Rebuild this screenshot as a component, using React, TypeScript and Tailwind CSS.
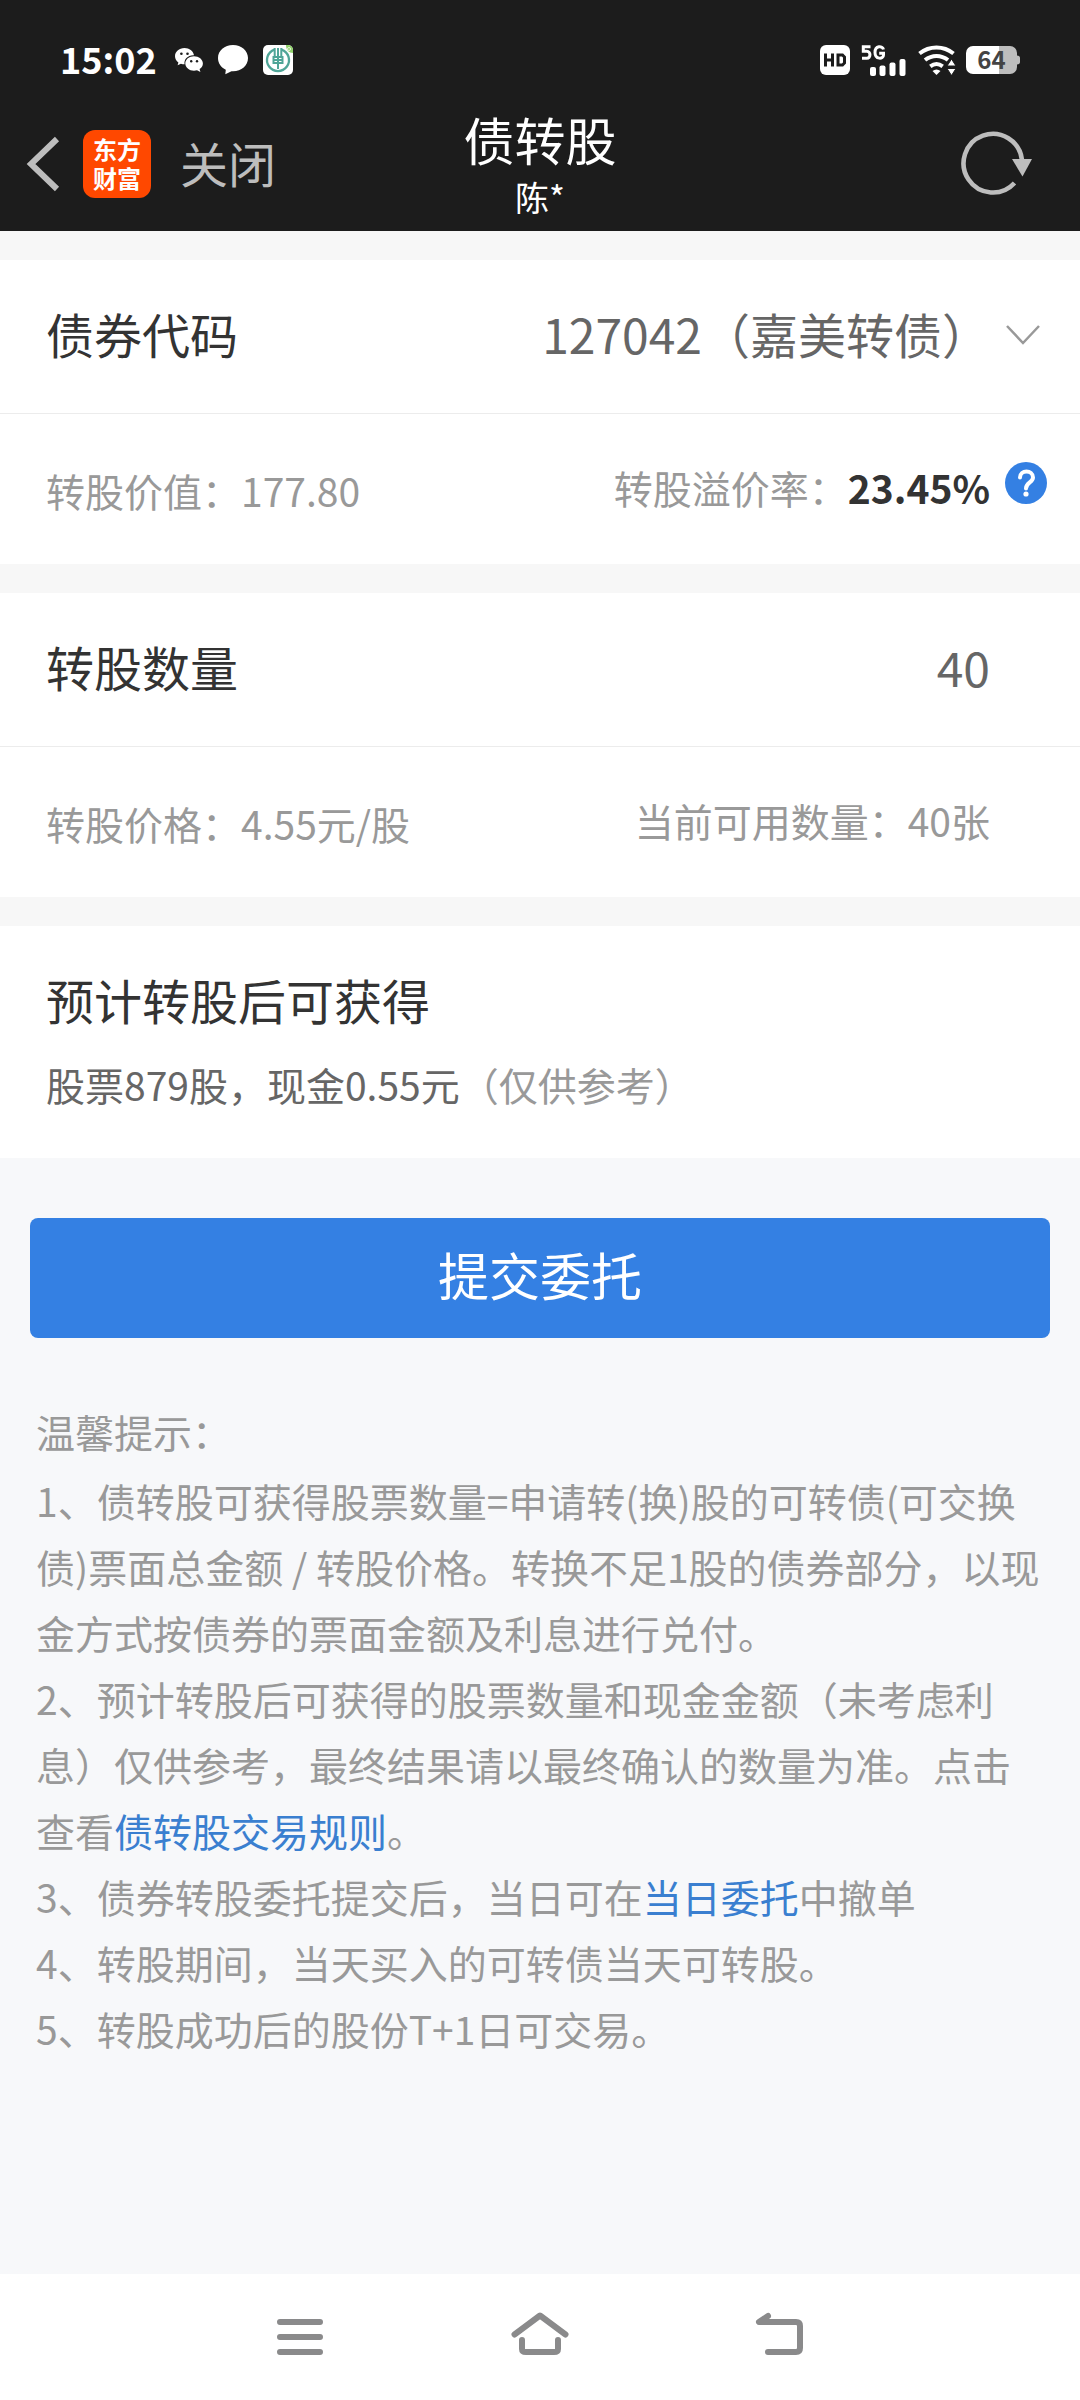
import { useState, type ReactNode } from 'react'

const BONDS = [{ code: '127042', name: '嘉美转债' }]

function StatusBar() {
  return (
    <div className="flex items-center justify-between h-[120px] pl-[60px] pr-[60px]">
      <div className="flex items-center">
        <span className="pb-1 text-[36px] leading-[48px] font-bold">15:02</span>
        <svg className="ml-[17px]" width="30" height="26" viewBox="0 0 30 26" aria-hidden="true">
          <path fill="#fff" d="M10.500 1C5 1 1 4.700 1 9.200c0 2.600 1.300 4.700 3.400 6.200L3.600 18.300l3.300-1.600c1.200.4 2.300.6 3.700.6C9.600 12.500 13.800 8 20 8.300 19.200 4 15.300 1 10.500 1z" />
          <path fill="#fff" d="M20 9.300c-4.900 0-8.700 3.200-8.700 7.200 0 4 3.900 7.200 8.700 7.200 1.100 0 2-.2 3-.5l3.400 1.700-.8-2.800c2-1.400 3.300-3.300 3.300-5.600 0-4-4-7.200-8.900-7.200z" />
          <g fill="#1c1c1c">
            <circle cx="7.400" cy="6.800" r="1.300" />
            <circle cx="13.500" cy="6.800" r="1.300" />
            <circle cx="17.200" cy="14.200" r="1.200" />
            <circle cx="23" cy="14.200" r="1.200" />
          </g>
        </svg>
        <svg className="ml-[14px]" width="30" height="30" viewBox="0 0 30 30" aria-hidden="true">
          <path fill="#fff" d="M15 0C6.500 0 0 5.600 0 13c0 5.200 3.100 9.500 7.800 11.700L7.300 29.300l6.200-3.100c.5 0 1 .1 1.500.1 8.500 0 15-5.700 15-13.200S23.500 0 15 0z" />
        </svg>
        <svg className="ml-[15px]" width="30" height="30" viewBox="0 0 30 30" aria-hidden="true">
          <rect width="30" height="30" rx="5" fill="#fff" />
          <path d="M23 0h2a5 5 0 0 1 5 5v3c-4 0-7-3-7-8z" fill="#8fd16a" />
          <circle cx="26" cy="4" r="1.500" fill="none" stroke="#e9f7df" />
          <g fill="none" stroke="#4fa597">
            <path strokeWidth="2.300" d="M11.500 4.600a11 11 0 1 0 7 0" />
            <path strokeWidth="2" d="M11.700 3v9M18.300 3v9M15 3v21" />
            <path strokeWidth="2" d="M10.500 12h9v6h-9zM10.500 15h9" />
          </g>
        </svg>
      </div>
      <div className="flex items-center">
        <svg width="30" height="30" viewBox="0 0 30 30" aria-hidden="true">
          <rect width="30" height="30" rx="6" fill="#fff" />
          <g fill="none" stroke="#1c1c1c" strokeWidth="3">
            <path d="M5.500 8.500v13M12.500 8.500v13M5.500 15h7" />
            <path d="M18 10h4.500l2 2v6l-2 2H18z" />
          </g>
        </svg>
        <svg className="ml-[11px]" width="45" height="31" viewBox="0 0 45 31" aria-hidden="true">
          <g fill="none" stroke="#fff" strokeWidth="3">
            <path d="M9.500 1.800H2.300v4.500h3.500c4.200 0 4.200 7 0 7H1" />
            <path d="M22.500 4.500C21.500.5 14 .3 14 7.500s8.500 7 8.500 2.500V8.200h-4.300" />
          </g>
          <g fill="#fff">
            <rect x="9" y="22" width="6" height="9" rx="2" />
            <rect x="18.500" y="20.500" width="6" height="10.500" rx="2" />
            <rect x="28.500" y="17.500" width="6" height="13.500" rx="2" />
            <rect x="38.500" y="14" width="6" height="17" rx="2" />
          </g>
        </svg>
        <svg className="ml-[12px]" width="38" height="30" viewBox="0 0 38 30" aria-hidden="true">
          <g fill="none" stroke="#fff" strokeWidth="4">
            <path d="M1.500 8.500C11.500.5 25.500.5 35.500 8.500" />
            <path d="M7 15c7-5.500 16-5.500 23 0" />
            <path d="M12.300 21.300c4-3 8.400-3 12.400 0" />
          </g>
          <path fill="#fff" d="M14.500 26c2.500-2 5.500-2 8 0l-4 4z" />
          <path fill="#fff" stroke="#1c1c1c" strokeWidth="1" d="M33.500 14l4.500 7h-9zM33.500 30.500l4.500-7h-9z" />
        </svg>
        <div className="relative ml-[10px]">
          <svg width="54" height="28" viewBox="0 0 54 28" aria-hidden="true">
            <path fill="#bdbdbd" d="M33 0h11a7 7 0 0 1 7 7v2.500c2 0 3 1 3 2.500v4c0 1.500-1 2.500-3 2.500V21a7 7 0 0 1-7 7H33z" />
            <path fill="#fff" d="M33 0H7a7 7 0 0 0-7 7v14a7 7 0 0 0 7 7h26z" />
          </svg>
          <span className="absolute inset-y-0 left-0 w-[51px] text-center text-[24px] leading-[26px] font-bold text-[#444]">64</span>
        </div>
      </div>
    </div>
  )
}

function TitleBar() {
  return (
    <div className="grid grid-cols-[1fr_auto_1fr] items-start h-[111px]">
      <div className="flex items-center pl-[26px] h-[88px]">
        <button type="button" aria-label="返回">
          <svg width="34" height="56" viewBox="0 0 34 56" fill="none" stroke="#bdbdbd" strokeWidth="6">
            <path d="M31 3L5 28l26 25" />
          </svg>
        </button>
        <span className="ml-[23px] w-[68px] h-[68px] pt-[4px] rounded-[12px] bg-[#ff4800] text-center text-[24px] leading-[29px] font-bold">
          东方<br />财富
        </span>
        <button type="button" className="ml-[29px] pb-1 text-[48px] leading-[64px] text-[#bdbdbd]">关闭</button>
      </div>
      <div className="text-center -mt-3">
        <h1 className="text-[51px] leading-[62px]">债转股</h1>
        <p className="text-[34px] leading-[54px]">陈*</p>
      </div>
      <div className="flex items-center justify-end pr-[48px] h-[84px]">
        <button type="button" aria-label="刷新">
          <svg width="72" height="66" viewBox="0 0 72 66" aria-hidden="true">
            <path d="M54.500 54A29.300 29.300 0 1 1 62 31" fill="none" stroke="#bdbdbd" strokeWidth="4.600" />
            <path fill="#bdbdbd" d="M52 30h20l-9.500 17.500z" />
          </svg>
        </button>
      </div>
    </div>
  )
}

function InfoRow({ left, right, help }: { left: string; right: ReactNode; help?: boolean }) {
  return (
    <div className="flex items-center justify-between h-[150px] pb-1 pl-[46px] text-[39px] leading-[54px] text-[#999]">
      <span className="pt-[6px]">{left}</span>
      <div className="flex items-start">
        <span>{right}</span>
        <span className="w-[90px] pt-[2px] pl-[15px]">
          {help && (
            <button type="button" aria-label="转股溢价率说明" className="block rounded-full bg-[#3480e3]">
              <svg width="42" height="42" viewBox="0 0 42 42" fill="none" stroke="#fff" strokeWidth="4" strokeLinecap="round">
                <path d="M15 15.500c0-8 13-8 13 0 0 5-7 5-7 11" />
                <circle cx="21" cy="32" r="2.600" fill="#fff" stroke="none" />
              </svg>
            </button>
          )}
        </span>
      </div>
    </div>
  )
}

function NavBar() {
  return (
    <nav className="flex items-center justify-center gap-[180px] h-[126px] bg-white">
      <button type="button" aria-label="菜单">
        <svg width="60" height="46" viewBox="0 0 60 46" fill="none" stroke="#8a8a8b" strokeWidth="6" strokeLinecap="round">
          <path d="M10 8h40M10 23h40M10 38h40" />
        </svg>
      </button>
      <button type="button" aria-label="主页">
        <svg className="overflow-visible" width="60" height="46" viewBox="0 0 60 46" fill="none" stroke="#8a8a8b" strokeWidth="6" strokeLinecap="round" strokeLinejoin="round">
          <path d="M4.500 20.500L30 1.500l25.500 19" />
          <path d="M12 26v9q0 3 4 3h28q4 0 4-3v-9" />
        </svg>
      </button>
      <button type="button" aria-label="后退">
        <svg className="overflow-visible" width="60" height="46" viewBox="0 0 60 46" fill="none" stroke="#8a8a8b" strokeWidth="6" strokeLinecap="round" strokeLinejoin="round">
          <path d="M18 2L9 8h37q4 0 4 4v22q0 4-4 4H18" />
        </svg>
      </button>
    </nav>
  )
}

export default function App() {
  const [code, setCode] = useState('127042')
  const [amount, setAmount] = useState('40')

  return (
    <div className="flex flex-col min-h-screen bg-[#f7f8fa] font-['Noto_Sans_CJK_SC',sans-serif]">
      <header className="bg-[#1c1c1c] text-white">
        <StatusBar />
        <TitleBar />
      </header>

      <main className="flex-1">
        <form onSubmit={e => e.preventDefault()}>
          <div className="flex flex-col gap-[29px] pt-[29px] bg-[#f7f7f7]">
            <section className="bg-white">
              <div className="flex items-center h-[154px] pb-2 pl-[46px] pr-[30px] border-b border-[#ececec] text-[48px] leading-[70px]">
                <label htmlFor="bond" className="text-[#333]">债券代码</label>
                <div className="relative flex-1">
                  <select
                    id="bond"
                    value={code}
                    onChange={e => setCode(e.target.value)}
                    className="block w-full appearance-none bg-transparent pr-[60px] text-[#666] [text-align-last:right]"
                  >
                    {BONDS.map(b => (
                      <option key={b.code} value={b.code}>{`${b.code}（${b.name}）`}</option>
                    ))}
                  </select>
                  <svg className="absolute right-[9px] top-[26px] pointer-events-none" width="36" height="22" viewBox="0 0 36 22" fill="none" stroke="#999" strokeWidth="2.500">
                    <path d="M2 2l16 17L34 2" />
                  </svg>
                </div>
              </div>
              <InfoRow left="转股价值：177.80" right={<>转股溢价率：<b className="text-[#333]">23.45%</b></>} help />
            </section>

            <section className="bg-white">
              <div className="flex items-center h-[154px] pb-2 pl-[46px] pr-[30px] border-b border-[#ececec] text-[48px] leading-[70px]">
                <label htmlFor="amount" className="text-[#333]">转股数量</label>
                <input
                  id="amount"
                  inputMode="numeric"
                  value={amount}
                  onChange={e => setAmount(e.target.value)}
                  className="flex-1 min-w-0 h-[70px] pr-[60px] text-right text-[#666] outline-none"
                />
              </div>
              <InfoRow left="转股价格：4.55元/股" right="当前可用数量：40张" />
            </section>

            <section className="bg-white h-[232px] pl-[46px] pt-[38px]">
              <h2 className="text-[48px] leading-[70px] text-[#333]">预计转股后可获得</h2>
              <p className="mt-[23px] text-[39px] leading-[54px] text-[#666]">
                股票879股，现金0.55元<span className="text-[#999]">（仅供参考）</span>
              </p>
            </section>
          </div>

          <div className="px-[30px] pt-[60px]">
            <button type="submit" className="block w-full h-[120px] pb-2 rounded-[8px] bg-[#3480e3] text-[51px] leading-[70px] text-white">
              提交委托
            </button>
          </div>
        </form>

        <div className="px-[36px] pt-[60px] text-[39px] leading-[66px] text-[#999]">
          <p className="mb-[3px]">温馨提示：</p>
          <p>1、债转股可获得股票数量=申请转(换)股的可转债(可交换债)票面总金额 / 转股价格。转换不足1股的债券部分，以现金方式按债券的票面金额及利息进行兑付。</p>
          <p>
            2、预计转股后可获得的股票数量和现金金额（未考虑利息）仅供参考，最终结果请以最终确认的数量为准。点击查看<a href="#rules" className="text-[#3a7fd0]">债转股交易规则</a>。
          </p>
          <p>3、债券转股委托提交后，当日可在<a href="#orders" className="text-[#3a7fd0]">当日委托</a>中撤单</p>
          <p>4、转股期间，当天买入的可转债当天可转股。</p>
          <p>5、转股成功后的股份T+1日可交易。</p>
        </div>
      </main>

      <NavBar />
    </div>
  )
}
